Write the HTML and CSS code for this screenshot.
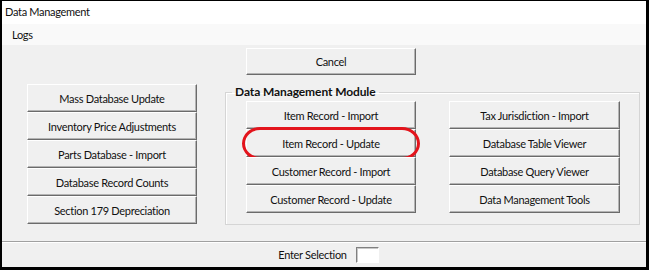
FILE: index.html
```html
<!DOCTYPE html>
<html lang="en">
<head>
    <meta charset="UTF-8">
    <meta name="viewport" content="width=device-width, initial-scale=1.0">
    <title>Data Management</title>
    <link rel="stylesheet" href="styles.css">
</head>
<body>
    <div class="window">
        <div class="titlebar">Data Management</div>
        <div class="menubar"><span class="menu-item">Logs</span></div>

        <div class="content">
            <div class="side">
                <button class="btn">Mass Database Update</button>
                <button class="btn">Inventory Price Adjustments</button>
                <button class="btn">Parts Database - Import</button>
                <button class="btn">Database Record Counts</button>
                <button class="btn">Section 179 Depreciation</button>
            </div>

            <div class="center">
                <button class="btn cancel">Cancel</button>

                <fieldset class="group">
                    <legend>Data Management Module</legend>
                    <div class="group-cols">
                        <div class="col">
                            <button class="btn">Item Record - Import</button>
                            <button class="btn marked">Item Record - Update<span class="ring"></span></button>
                            <button class="btn">Customer Record - Import</button>
                            <button class="btn">Customer Record - Update</button>
                        </div>
                        <div class="col">
                            <button class="btn">Tax Jurisdiction - Import</button>
                            <button class="btn">Database Table Viewer</button>
                            <button class="btn">Database Query Viewer</button>
                            <button class="btn">Data Management Tools</button>
                        </div>
                    </div>
                </fieldset>
            </div>
        </div>

        <div class="statusbar">
            <label class="selection">
                Enter Selection
                <input type="text" class="sel-input">
            </label>
        </div>
    </div>
</body>
</html>
```

FILE: styles.css
```css
body {
    margin: 0;
    font-family: Lato, "Noto Sans", sans-serif;
    font-size: 11px;
    letter-spacing: -0.3px;
    color: #111;
    background: #000;
}
.window {
    width: 644px;
    height: 266px;
    border-style: solid;
    border-color: #000;
    border-width: 1px 3px 3px 2px;
    background-color: #f0f0f0;
    display: flex;
    flex-direction: column;
}
.titlebar {
    height: 23px;
    line-height: 22px;
    padding-left: 3px;
    background-color: #fff;
}
.menubar {
    height: 21px;
    line-height: 21px;
    background-color: #f9f9f9;
}
.menu-item {
    padding-left: 10px;
}
.content {
    flex: 1;
    display: flex;
    padding: 3px 0 0 25px;
}
.side {
    display: flex;
    flex-direction: column;
    width: 170px;
    margin-top: 36px;
}
.center {
    margin-left: 28px;
    display: flex;
    flex-direction: column;
}
.btn {
    position: relative;
    height: 28px;
    width: 100%;
    padding: 0;
    font-family: inherit;
    font-size: 11px;
    letter-spacing: -0.3px;
    color: #111;
    background-color: #f0f0f0;
    border: 1px solid;
    border-color: #fff #6b6b6b #6b6b6b #fff;
    box-shadow: inset -1px -1px 0 #b4b4b4;
}
.cancel {
    width: 170px;
    height: 27px;
    margin-left: 21px;
}
.group {
    margin: 9px 0 0 0;
    padding: 0 19px 11px 20px;
    width: 374px;
    border: 1px solid #d5d5d5;
    box-shadow: inset 1px 1px 0 #fff;
}
.group legend {
    font-weight: bold;
    font-size: 12px;
    letter-spacing: -0.1px;
    line-height: 16px;
    padding: 0 3px;
    margin-left: -14px;
}
.group-cols {
    display: flex;
    justify-content: space-between;
    margin-top: 1px;
}
.col {
    display: flex;
    flex-direction: column;
    width: 171px;
}
.col:first-child .btn {
    width: 170px;
}
.ring {
    position: absolute;
    left: -5px;
    right: -5px;
    top: -3px;
    bottom: -4px;
    border: 3px solid #e3141c;
    border-radius: 18px / 50%;
}
.statusbar {
    height: 25px;
    border-top: 1px solid #a0a0a0;
    box-shadow: inset 0 1px 0 #fff;
    display: flex;
    align-items: center;
    justify-content: center;
    padding-left: 9px;
}
.selection {
    display: flex;
    align-items: center;
    gap: 9px;
}
.sel-input {
    width: 21px;
    height: 14px;
    padding: 0;
    border: 1px solid;
    border-color: #808080 #fff #fff #808080;
    box-shadow: inset 1px 1px 0 #c8c8c8;
    background: #fff;
}
```
